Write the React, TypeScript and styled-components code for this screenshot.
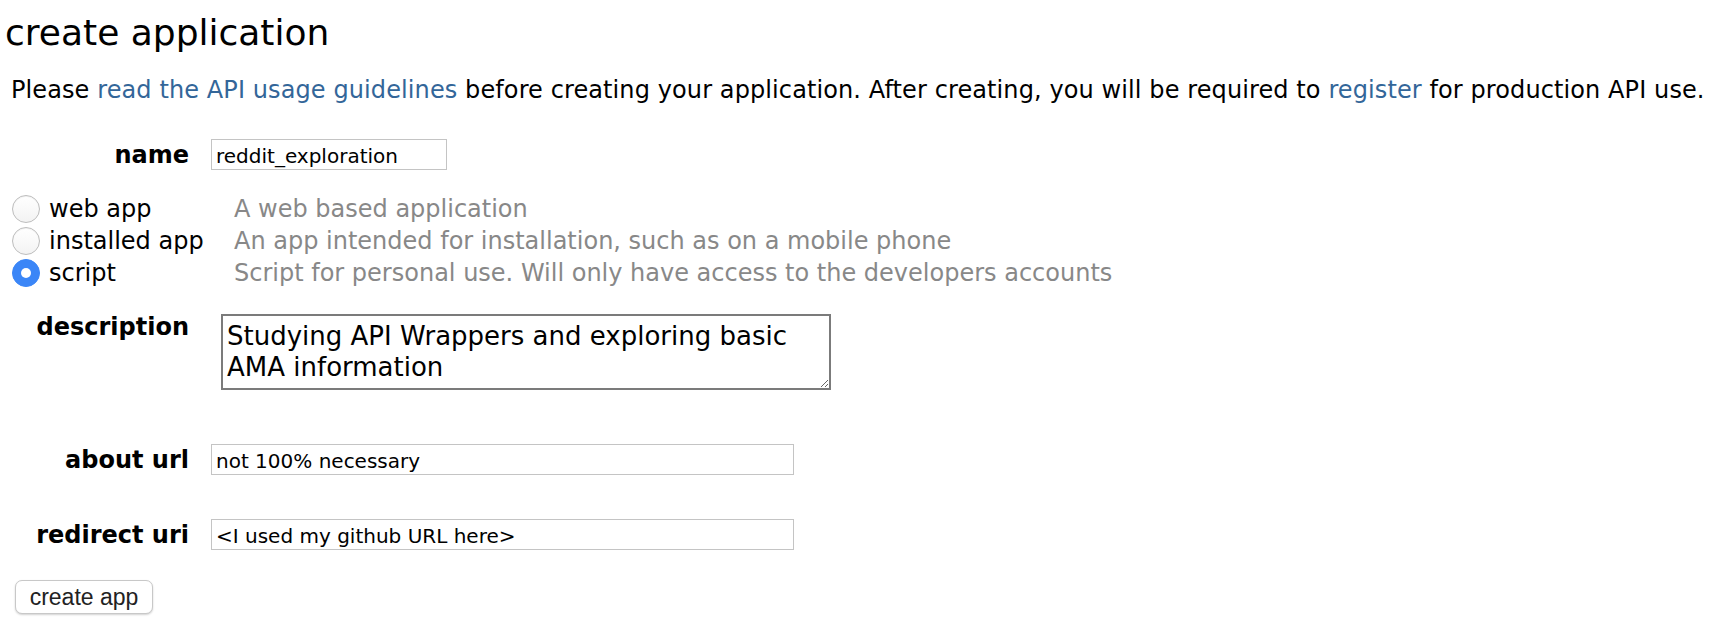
import React from 'react';
import styled, { createGlobalStyle } from 'styled-components';

const GlobalStyle = createGlobalStyle`
  html, body {
    margin: 0;
    padding: 0;
    background: #ffffff;
  }
  body {
    font-family: "DejaVu Sans", Verdana, sans-serif;
    color: #000;
  }
`;

const Page = styled.div`
  padding: 11px 0 0 5px;
  width: 1722px;
  height: 630px;
  box-sizing: border-box;
`;

const Title = styled.h1`
  margin: 0;
  font-size: 36px;
  font-weight: normal;
  line-height: 44px;
`;

const Intro = styled.p`
  margin: 20px 0 0 6px;
  font-size: 24px;
  line-height: 30px;
  letter-spacing: 0.1px;
  white-space: nowrap;
`;

const Link = styled.a`
  color: #336699;
  text-decoration: none;
`;

const Form = styled.form`
  margin-top: 34px;
  display: flex;
  flex-direction: column;
`;

const FieldRow = styled.div<{ $top?: number; $alignTop?: boolean }>`
  display: grid;
  grid-template-columns: 184px 1fr;
  column-gap: 22px;
  align-items: ${(p) => (p.$alignTop ? 'start' : 'center')};
  margin-top: ${(p) => p.$top ?? 0}px;
`;

const Label = styled.label`
  text-align: right;
  font-weight: bold;
  font-size: 24px;
  line-height: 26px;
`;

const TextInput = styled.input<{ $w: number }>`
  width: ${(p) => p.$w}px;
  height: 31px;
  box-sizing: border-box;
  border: 1px solid #c4c4c4;
  padding: 2px 4px 0;
  font-family: "DejaVu Sans", Verdana, sans-serif;
  font-size: 20px;
  color: #000;
  outline: none;
`;

const TextArea = styled.textarea`
  width: 610px;
  height: 76px;
  box-sizing: border-box;
  margin-left: 10px;
  border: 2px solid #7b7b7b;
  padding: 5px 4px;
  font-family: "DejaVu Sans", Verdana, sans-serif;
  font-size: 26px;
  line-height: 31px;
  color: #000;
  resize: both;
  outline: none;
  overflow: hidden;
`;

const KindList = styled.div`
  margin-top: 23px;
  display: flex;
  flex-direction: column;
`;

const KindRow = styled.div`
  display: grid;
  grid-template-columns: 229px 1fr;
  align-items: center;
  height: 32px;
`;

const KindOption = styled.label`
  display: flex;
  align-items: center;
  gap: 9px;
  padding-left: 7px;
  font-size: 24px;
`;

const Radio = styled.span<{ $checked?: boolean }>`
  width: 28px;
  height: 28px;
  border-radius: 50%;
  box-sizing: border-box;
  display: flex;
  align-items: center;
  justify-content: center;
  flex: none;
  background: ${(p) => (p.$checked ? '#3b86f7' : 'linear-gradient(#ffffff, #f3f3f3)')};
  border: 1px solid ${(p) => (p.$checked ? '#3b86f7' : '#bdbdbd')};
  box-shadow: ${(p) => (p.$checked ? 'none' : 'inset 0 1px 1px rgba(0,0,0,0.05)')};
  &::after {
    content: '';
    display: ${(p) => (p.$checked ? 'block' : 'none')};
    width: 10px;
    height: 10px;
    border-radius: 50%;
    background: #ffffff;
  }
`;

const KindDesc = styled.span`
  color: #888888;
  font-size: 24px;
`;

const SubmitButton = styled.button`
  margin-top: 30px;
  margin-left: 10px;
  align-self: flex-start;
  width: 138px;
  height: 34px;
  background: #ffffff;
  border: 1px solid #c8c8c8;
  border-radius: 7px;
  box-shadow: 0 1px 2px rgba(0, 0, 0, 0.18);
  font-family: "Liberation Sans", Arial, sans-serif;
  font-size: 23px;
  color: #222;
  padding: 0;
`;

const kinds = [
  { id: 'web', label: 'web app', desc: 'A web based application' },
  { id: 'installed', label: 'installed app', desc: 'An app intended for installation, such as on a mobile phone' },
  { id: 'script', label: 'script', desc: 'Script for personal use. Will only have access to the developers accounts' },
];

export default function App() {
  return (
    <Page>
      <GlobalStyle />
      <Title>create application</Title>
      <Intro>
        Please <Link href="#">read the API usage guidelines</Link> before creating your application. After creating, you
        will be required to <Link href="#">register</Link> for production API use.
      </Intro>
      <Form onSubmit={(e) => e.preventDefault()}>
        <FieldRow>
          <Label>name</Label>
          <TextInput $w={236} defaultValue="reddit_exploration" />
        </FieldRow>
        <KindList>
          {kinds.map((k) => (
            <KindRow key={k.id}>
              <KindOption>
                <Radio $checked={k.id === 'script'} />
                {k.label}
              </KindOption>
              <KindDesc>{k.desc}</KindDesc>
            </KindRow>
          ))}
        </KindList>
        <FieldRow $top={25} $alignTop>
          <Label>description</Label>
          <TextArea defaultValue={'Studying API Wrappers and exploring basic AMA information'} />
        </FieldRow>
        <FieldRow $top={54}>
          <Label>about url</Label>
          <TextInput $w={583} defaultValue="not 100% necessary" />
        </FieldRow>
        <FieldRow $top={44}>
          <Label>redirect uri</Label>
          <TextInput $w={583} defaultValue="<I used my github URL here>" />
        </FieldRow>
        <SubmitButton type="submit">create app</SubmitButton>
      </Form>
    </Page>
  );
}
